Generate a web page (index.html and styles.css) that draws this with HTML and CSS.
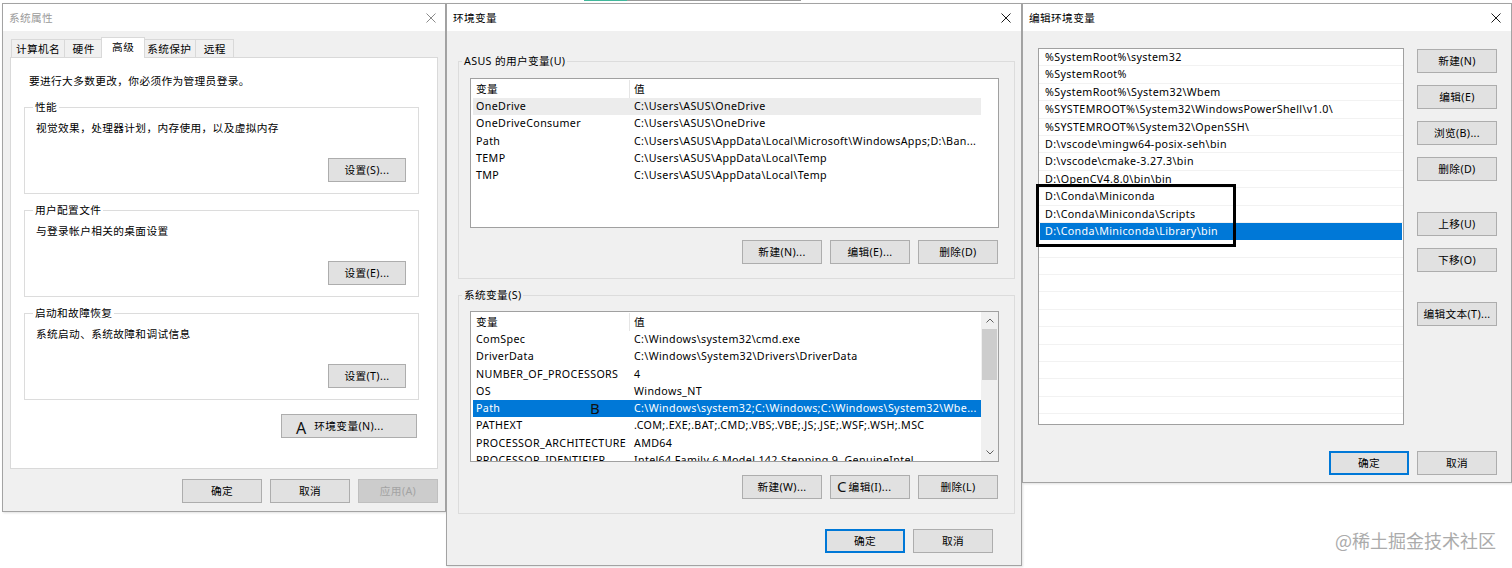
FILE: index.html
```html
<!DOCTYPE html>
<html>
  <head>
    <title>环境变量</title>
    <meta charset="utf-8">
    <link rel="stylesheet" href="styles.css">
  </head>
  <body>
    <div class="desktop">
      <span class="strip strip-teal"></span>
      <span class="strip strip-gray"></span>

      <!-- 系统属性 -->
      <div class="window win-sys">
        <div class="titlebar inactive">
          <span class="title">系统属性</span>
          <svg class="close" viewBox="0 0 10 10"><path d="M0.5 0.5L9.5 9.5M9.5 0.5L0.5 9.5"/></svg>
        </div>
        <div class="win-body sys-body">
          <div class="tabs">
            <span class="tab">计算机名</span>
            <span class="tab">硬件</span>
            <span class="tab active">高级</span>
            <span class="tab">系统保护</span>
            <span class="tab">远程</span>
          </div>
          <div class="panel">
            <p class="note">要进行大多数更改，你必须作为管理员登录。</p>
            <div class="group sys-group">
              <span class="legend">性能</span>
              <p class="group-text">视觉效果，处理器计划，内存使用，以及虚拟内存</p>
              <button class="btn btn-set">设置(S)...</button>
            </div>
            <div class="group sys-group">
              <span class="legend">用户配置文件</span>
              <p class="group-text">与登录帐户相关的桌面设置</p>
              <button class="btn btn-set">设置(E)...</button>
            </div>
            <div class="group sys-group">
              <span class="legend">启动和故障恢复</span>
              <p class="group-text">系统启动、系统故障和调试信息</p>
              <button class="btn btn-set">设置(T)...</button>
            </div>
            <button class="btn btn-env"><span class="mark mark-a">A</span>环境变量(N)...</button>
          </div>
          <div class="actions sys-actions">
            <button class="btn">确定</button>
            <button class="btn">取消</button>
            <button class="btn" disabled>应用(A)</button>
          </div>
        </div>
      </div>

      <!-- 环境变量 -->
      <div class="window win-env">
        <div class="titlebar">
          <span class="title">环境变量</span>
          <svg class="close" viewBox="0 0 10 10"><path d="M0.5 0.5L9.5 9.5M9.5 0.5L0.5 9.5"/></svg>
        </div>
        <div class="win-body env-body">
          <div class="group env-group">
            <span class="legend">ASUS 的用户变量(U)</span>
            <div class="list var-list user-list">
              <div class="rows">
                <div class="row head"><span>变量</span><span>值</span></div>
                <div class="row hover"><span>OneDrive</span><span>C:\Users\ASUS\OneDrive</span></div>
                <div class="row"><span>OneDriveConsumer</span><span>C:\Users\ASUS\OneDrive</span></div>
                <div class="row"><span>Path</span><span>C:\Users\ASUS\AppData\Local\Microsoft\WindowsApps;D:\Ban...</span></div>
                <div class="row"><span>TEMP</span><span>C:\Users\ASUS\AppData\Local\Temp</span></div>
                <div class="row"><span>TMP</span><span>C:\Users\ASUS\AppData\Local\Temp</span></div>
              </div>
            </div>
            <div class="btn-row">
              <button class="btn">新建(N)...</button>
              <button class="btn">编辑(E)...</button>
              <button class="btn">删除(D)</button>
            </div>
          </div>
          <div class="group env-group">
            <span class="legend">系统变量(S)</span>
            <div class="list var-list">
              <div class="rows">
                <div class="row head"><span>变量</span><span>值</span></div>
                <div class="row"><span>ComSpec</span><span>C:\Windows\system32\cmd.exe</span></div>
                <div class="row"><span>DriverData</span><span>C:\Windows\System32\Drivers\DriverData</span></div>
                <div class="row"><span>NUMBER_OF_PROCESSORS</span><span>4</span></div>
                <div class="row"><span>OS</span><span>Windows_NT</span></div>
                <div class="row sel"><span>Path</span><span>C:\Windows\system32;C:\Windows;C:\Windows\System32\Wbe...</span><b class="mark mark-b">B</b></div>
                <div class="row"><span>PATHEXT</span><span>.COM;.EXE;.BAT;.CMD;.VBS;.VBE;.JS;.JSE;.WSF;.WSH;.MSC</span></div>
                <div class="row"><span>PROCESSOR_ARCHITECTURE</span><span>AMD64</span></div>
                <div class="row"><span>PROCESSOR_IDENTIFIER</span><span>Intel64 Family 6 Model 142 Stepping 9, GenuineIntel</span></div>
              </div>
              <div class="scrollbar">
                <span class="arrow"><svg viewBox="0 0 8 5"><path d="M0.5 4.5L4 1L7.5 4.5"/></svg></span>
                <span class="thumb"></span>
                <span class="arrow arrow-down"><svg viewBox="0 0 8 5"><path d="M0.5 0.5L4 4L7.5 0.5"/></svg></span>
              </div>
            </div>
            <div class="btn-row">
              <button class="btn">新建(W)...</button>
              <button class="btn"><span class="mark mark-c">C</span>编辑(I)...</button>
              <button class="btn">删除(L)</button>
            </div>
          </div>
          <div class="actions env-actions">
            <button class="btn default">确定</button>
            <button class="btn">取消</button>
          </div>
        </div>
      </div>

      <!-- 编辑环境变量 -->
      <div class="window win-edit">
        <div class="titlebar">
          <span class="title">编辑环境变量</span>
          <svg class="close" viewBox="0 0 10 10"><path d="M0.5 0.5L9.5 9.5M9.5 0.5L0.5 9.5"/></svg>
        </div>
        <div class="win-body edit-body">
          <div class="list edit-list">
            <div class="item">%SystemRoot%\system32</div>
            <div class="item">%SystemRoot%</div>
            <div class="item">%SystemRoot%\System32\Wbem</div>
            <div class="item">%SYSTEMROOT%\System32\WindowsPowerShell\v1.0\</div>
            <div class="item">%SYSTEMROOT%\System32\OpenSSH\</div>
            <div class="item">D:\vscode\mingw64-posix-seh\bin</div>
            <div class="item">D:\vscode\cmake-3.27.3\bin</div>
            <div class="item">D:\OpenCV4.8.0\bin\bin</div>
            <div class="item">D:\Conda\Miniconda</div>
            <div class="item">D:\Conda\Miniconda\Scripts</div>
            <div class="item sel">D:\Conda\Miniconda\Library\bin</div>
            <div class="item"></div>
            <div class="item"></div>
            <div class="item"></div>
            <div class="item"></div>
            <div class="item"></div>
            <div class="item"></div>
            <div class="item"></div>
            <div class="item"></div>
            <div class="item"></div>
            <div class="item"></div>
            <div class="item"></div>
          </div>
          <div class="side-btns">
            <button class="btn">新建(N)</button>
            <button class="btn">编辑(E)</button>
            <button class="btn">浏览(B)...</button>
            <button class="btn">删除(D)</button>
            <button class="btn move-up">上移(U)</button>
            <button class="btn">下移(O)</button>
            <button class="btn edit-text">编辑文本(T)...</button>
          </div>
          <div class="actions edit-actions">
            <button class="btn default">确定</button>
            <button class="btn">取消</button>
          </div>
        </div>
        <span class="callout"></span>
      </div>

      <div class="watermark">@稀土掘金技术社区</div>
    </div>
  </body>
</html>
```

FILE: styles.css
```css
* {
  box-sizing: border-box;
}
html, body {
  margin: 0;
  height: 100%;
}
body {
  background: #fff;
  color: #000;
  font-family: "Noto Sans", "Noto Sans CJK SC", sans-serif;
  font-size: 10.7px;
  line-height: 16px;
  letter-spacing: 0.35px;
}
p {
  margin: 0;
}
.desktop {
  position: relative;
  width: 1512px;
  height: 568px;
  overflow: hidden;
}
.strip {
  position: absolute;
  top: 0;
  height: 1px;
}
.strip-teal {
  left: 584px;
  width: 43px;
  background: #41b89c;
}
.strip-gray {
  left: 627px;
  width: 174px;
  background: #9a9a9a;
}

/* windows */
.window {
  position: absolute;
  display: flex;
  flex-direction: column;
  background: #f0f0f0;
  border: 1px solid #a3a3a3;
  box-shadow: 1px 1px 2px rgba(0, 0, 0, 0.12);
}
.win-sys {
  left: 2px;
  top: 3px;
  width: 444px;
  height: 509px;
}
.win-env {
  left: 446px;
  top: 3px;
  width: 576px;
  height: 563px;
}
.win-edit {
  left: 1022px;
  top: 3px;
  width: 490px;
  height: 480px;
}
.titlebar {
  flex: none;
  height: 27px;
  display: flex;
  align-items: center;
  justify-content: space-between;
  padding: 0 10px 0 6px;
  background: #fff;
}
.close {
  width: 10px;
  height: 10px;
  fill: none;
  stroke: #1a1a1a;
  stroke-width: 1;
}
.titlebar.inactive .title {
  color: #9a9a9a;
}
.titlebar.inactive .close {
  stroke: #8a8a8a;
}
.titlebar.inactive {
  padding-right: 9px;
}
.win-body {
  flex: 1;
  display: flex;
  flex-direction: column;
}

/* buttons */
.btn {
  position: relative;
  font: inherit;
  letter-spacing: inherit;
  color: #000;
  width: 80px;
  height: 24px;
  padding: 0;
  background: #e1e1e1;
  border: 1px solid #adadad;
  display: flex;
  align-items: center;
  justify-content: center;
  white-space: nowrap;
}
.btn.default {
  border-color: #0078d7;
  box-shadow: inset 0 0 0 1px #0078d7;
}
.btn[disabled] {
  color: #a3a3a3;
  background: #cccccc;
  border-color: #bfbfbf;
}
.actions {
  display: flex;
  justify-content: flex-end;
  gap: 8px;
}

/* group boxes */
.group {
  display: flex;
  flex-direction: column;
  border: 1px solid #dcdcdc;
}
.legend {
  align-self: flex-start;
  margin: -9px 0 0 -3px;
  padding: 0 2px;
}

/* 系统属性 */
.sys-body {
  padding: 6px 7px 0 7px;
}
.tabs {
  position: relative;
  z-index: 1;
  display: flex;
  align-items: flex-end;
  height: 21px;
  margin: 0 0 -1px 1px;
}
.tab {
  min-width: 39px;
  height: 18px;
  margin-bottom: 1px;
  padding: 1px 4px 0;
  text-align: center;
  background: #f0f0f0;
  border: 1px solid #d9d9d9;
  border-bottom: 0;
  margin-left: -1px;
}
.tab:first-child {
  margin-left: 0;
}
.tab.active {
  min-width: 44px;
  height: 21px;
  margin: 0 -2px 0 -2px;
  padding-top: 1px;
  background: #fff;
  position: relative;
}
.panel {
  height: 412px;
  display: flex;
  flex-direction: column;
  background: #fff;
  border: 1px solid #d9d9d9;
  padding: 15px 18px 0 13px;
}
.panel .legend {
  background: #fff;
}
.note {
  margin: 0 0 18px 5px;
}
.sys-group {
  height: 87px;
  padding: 0 12px 11px 11px;
}
.sys-group + .sys-group {
  margin-top: 16px;
}
.group-text {
  margin-top: 5px;
}
.btn-set {
  width: 78px;
  align-self: flex-end;
  margin-top: auto;
}
.btn-env {
  width: 136px;
  align-self: flex-end;
  margin: 14px 2px 0 0;
}
.sys-actions {
  margin-top: 10px;
}

/* 环境变量 */
.env-body {
  padding: 30px 6px 0 11px;
}
.env-group {
  padding: 0 15px 14px 11px;
}
.env-group .legend {
  background: #f0f0f0;
  margin-left: -8px;
}
.env-group + .env-group {
  margin-top: 16px;
}
.list {
  background: #fff;
  border: 1px solid #a0a0a0;
  overflow: hidden;
}
.var-list {
  display: flex;
  height: 151px;
  margin-top: 8px;
}
.user-list {
  margin-top: 9px;
  height: 150px;
}
.rows {
  width: 510px;
  padding: 1px 0 0 2px;
}
.row {
  position: relative;
  display: grid;
  grid-template-columns: 156px 1fr;
  height: 17.3px;
  line-height: 17.3px;
  white-space: nowrap;
}
.row span {
  padding-left: 3px;
  overflow: hidden;
  text-overflow: ellipsis;
}
.row.head {
  height: 18px;
  line-height: 18px;
}
.row.head span + span {
  border-left: 1px solid #e5e5e5;
  padding-left: 4px;
}
.row span + span {
  padding-left: 5px;
}
.row.hover {
  background: #ececec;
}
.row.sel {
  background: #0078d7;
  color: #fff;
}
.scrollbar {
  width: 17px;
  margin-left: auto;
  display: flex;
  flex-direction: column;
  background: #f0f0f0;
}
.arrow {
  height: 17px;
  display: flex;
  align-items: center;
  justify-content: center;
}
.arrow svg {
  width: 8px;
  height: 5px;
  fill: none;
  stroke: #606060;
}
.arrow-down {
  margin-top: auto;
}
.thumb {
  height: 51px;
  margin: 0 1px;
  background: #cdcdcd;
}
.btn-row {
  display: flex;
  justify-content: flex-end;
  gap: 8px;
  margin: 12px 1px 0 0;
}
.env-group + .env-group .btn-row {
  margin-top: 13px;
}
.env-actions {
  margin: 15px 22px 0 0;
}

/* 编辑环境变量 */
.edit-body {
  display: grid;
  grid-template-columns: 366px 80px;
  column-gap: 13px;
  align-items: start;
  padding: 17px 13px 0 15px;
}
.edit-list {
  height: 377px;
}
.item {
  height: 17.4px;
  line-height: 17px;
  padding-left: 6px;
  border-bottom: 1px solid #f2f2f2;
  white-space: nowrap;
}
.item.sel {
  margin: 0 1px;
  padding-left: 5px;
  background: #0078d7;
  color: #fff;
  border-bottom-color: #0078d7;
}
.side-btns {
  display: flex;
  flex-direction: column;
  gap: 12px;
  padding-top: 1px;
}
.move-up {
  margin-top: 19px;
}
.edit-text {
  margin-top: 18px;
}
.edit-actions {
  grid-column: 1 / -1;
  margin-top: 18px;
}

/* annotations over the screenshot */
.mark {
  position: absolute;
  font-family: "Noto Sans", sans-serif;
  font-weight: normal;
  letter-spacing: 0;
  color: #111;
  line-height: 20px;
}
.mark-a {
  left: 14px;
  top: 3px;
  font-size: 16px;
}
.mark-b {
  left: 117px;
  top: -2px;
  font-size: 15px;
}
.mark-c {
  left: 6px;
  top: 0;
  font-size: 15px;
}
.callout {
  position: absolute;
  left: 13px;
  top: 180px;
  width: 200px;
  height: 63px;
  border: 3px solid #000;
}
.watermark {
  position: absolute;
  left: 1335px;
  top: 529px;
  font-family: "Noto Sans CJK SC", sans-serif;
  font-size: 18px;
  line-height: 22px;
  letter-spacing: 0;
  color: #ababab;
}
```
